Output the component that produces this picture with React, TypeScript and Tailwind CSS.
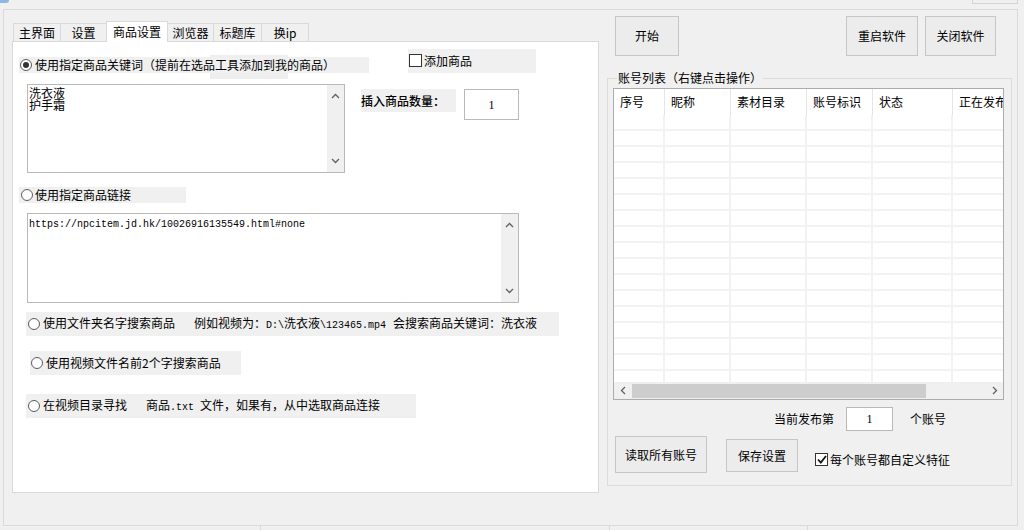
import React from "react";

const tabs = [
  { label: "主界面", w: "w-[48px]" },
  { label: "设置", w: "w-[46px]" },
  { label: "商品设置", w: "w-[62px]", active: true },
  { label: "浏览器", w: "w-[46px]" },
  { label: "标题库", w: "w-[48px]" },
  { label: "换ip", w: "w-[47px]" },
];

const columns = [
  { label: "序号", w: "w-[51px]" },
  { label: "昵称", w: "w-[66px]" },
  { label: "素材目录", w: "w-[76px]" },
  { label: "账号标识", w: "w-[66px]" },
  { label: "状态", w: "w-[80px]" },
  { label: "正在发布", w: "w-[60px]" },
];

function Radio({ checked = false }: { checked?: boolean }) {
  return (
    <span className="w-[12px] h-[12px] rounded-full border border-[#5c5c5c] bg-white flex items-center justify-center shrink-0">
      {checked && <span className="w-[6px] h-[6px] rounded-full bg-[#333333]" />}
    </span>
  );
}

function Check({ checked = false }: { checked?: boolean }) {
  return (
    <span className="w-[13px] h-[13px] border border-[#333333] bg-white flex items-center justify-center shrink-0">
      {checked && (
        <svg width="10" height="9" viewBox="0 0 10 9">
          <path d="M1 4.5 L3.8 7.5 L9 1" stroke="#111" strokeWidth="1.8" fill="none" />
        </svg>
      )}
    </span>
  );
}

function ArrowUp() {
  return (
    <svg width="9" height="6" viewBox="0 0 9 6">
      <path d="M1 5 L4.5 1.5 L8 5" stroke="#606060" strokeWidth="1.3" fill="none" />
    </svg>
  );
}

function ArrowDown() {
  return (
    <svg width="9" height="6" viewBox="0 0 9 6">
      <path d="M1 1 L4.5 4.5 L8 1" stroke="#606060" strokeWidth="1.3" fill="none" />
    </svg>
  );
}

function ArrowLeft() {
  return (
    <svg width="6" height="9" viewBox="0 0 6 9">
      <path d="M5 1 L1.5 4.5 L5 8" stroke="#606060" strokeWidth="1.3" fill="none" />
    </svg>
  );
}

function ArrowRight() {
  return (
    <svg width="6" height="9" viewBox="0 0 6 9">
      <path d="M1 1 L4.5 4.5 L1 8" stroke="#606060" strokeWidth="1.3" fill="none" />
    </svg>
  );
}

function Button({ label, className }: { label: string; className: string }) {
  return (
    <div
      className={
        "flex items-center justify-center border border-[#c6c6c6] bg-[#ececec] text-[12px] leading-none shrink-0 " +
        className
      }
    >
      {label}
    </div>
  );
}

function VScroll() {
  return (
    <div className="w-[17px] h-full bg-[#f0f0f0] flex flex-col items-center justify-between py-[8px] shrink-0">
      <ArrowUp />
      <ArrowDown />
    </div>
  );
}

export default function App() {
  return (
    <div className="w-[1024px] h-[530px] bg-[#f0f0f0] overflow-hidden flex flex-col text-black text-[12px] leading-none [font-family:'Noto_Sans_CJK_SC','Noto_Sans',sans-serif]">
      {/* top strip */}
      <div className="h-[9px] flex shrink-0">
        <div className="w-[9px] h-[3px] bg-[#8ab8e3] rounded-br-full" />
        <div className="ml-auto mr-[6px] w-[46px] h-[4px] border-x border-b border-[#d4d4d4]" />
      </div>

      {/* window frame */}
      <div className="ml-[3px] w-[1015px] h-[517px] border border-[#dadada] flex shrink-0">
        {/* left: tab control */}
        <div className="ml-[8px] mt-[11px] w-[587px] flex flex-col">
          <div className="h-[20px] flex items-end pl-[1px]">
            {tabs.map((t, i) =>
              t.active ? (
                <div
                  key={t.label}
                  className={
                    t.w +
                    " h-[21px] -mb-px -ml-px relative z-10 bg-white border-x border-t border-[#d9d9d9] flex items-center justify-center"
                  }
                >
                  {t.label}
                </div>
              ) : (
                <div
                  key={t.label}
                  className={
                    t.w +
                    (i === 0 ? " border-l" : "") +
                    " h-[18px] bg-[#f0f0f0] border-t border-r border-[#d9d9d9] flex items-center justify-center"
                  }
                >
                  {t.label}
                </div>
              )
            )}
          </div>

          <div className="w-[587px] h-[452px] bg-white border border-[#d9d9d9] relative flex flex-col">
            {/* box sitting behind the first option */}
            <div className="absolute left-[197px] top-[13px] w-[78px] h-[24px] bg-[#eeeeee]" />

            {/* option 1 + add goods */}
            <div className="mt-[7px] h-[24px] flex items-start">
              <div className="ml-[6px] mt-[8px] w-[350px] h-[16px] bg-[#f0f0f0] flex items-center relative z-10">
                <span className="ml-[1px]">
                  <Radio checked />
                </span>
                <span className="ml-[3px] whitespace-nowrap">使用指定商品关键词（提前在选品工具添加到我的商品）</span>
              </div>
              <div className="ml-[39px] w-[128px] h-[24px] bg-[#f0f0f0] flex items-center pb-[1px]">
                <span className="ml-[1px]">
                  <Check />
                </span>
                <span className="ml-[2px]">添加商品</span>
              </div>
            </div>

            {/* keywords box + count */}
            <div className="mt-[11px] flex items-start">
              <div className="ml-[14px] w-[318px] h-[89px] border border-[#b9b9b9] bg-white flex">
                <div className="flex-1 pl-[1px] pt-[2px] text-[12px] leading-[12px]">
                  <div>洗衣液</div>
                  <div>护手霜</div>
                </div>
                <VScroll />
              </div>
              <div className="ml-[16px] mt-[5px] w-[95px] h-[23px] bg-[#f0f0f0] flex items-center">
                <span className="font-medium">插入商品数量：</span>
              </div>
              <div className="ml-[8px] mt-[5px] w-[55px] h-[31px] border border-[#b9b9b9] bg-white flex items-center justify-center [font-family:'Liberation_Serif',serif] text-[12px]">
                1
              </div>
            </div>

            {/* option 2 */}
            <div className="mt-[14px] ml-[6px] w-[167px] h-[16px] bg-[#f0f0f0] flex items-center">
              <span className="ml-[2px]">
                <Radio />
              </span>
              <span className="ml-[2px] whitespace-nowrap">使用指定商品链接</span>
            </div>

            {/* link box */}
            <div className="mt-[10px] ml-[14px] w-[492px] h-[90px] border border-[#b9b9b9] bg-white flex">
              <div className="flex-1 pl-[1px] pt-[5px] text-[10px] leading-[12px] [font-family:'Liberation_Mono',monospace]">
                https://npcitem.jd.hk/10026916135549.html#none
              </div>
              <VScroll />
            </div>

            {/* option 3 */}
            <div className="mt-[9px] ml-[13px] w-[533px] h-[24px] bg-[#f0f0f0] flex items-center whitespace-nowrap">
              <span className="ml-[2px]">
                <Radio />
              </span>
              <span className="ml-[3px]">
                使用文件夹名字搜索商品
                <span className="ml-[19px]">例如视频为：</span>
                <span className="[font-family:'Liberation_Mono',monospace] text-[10px]">D:\</span>
                洗衣液
                <span className="[font-family:'Liberation_Mono',monospace] text-[10px]">\123465.mp4</span>
                <span className="ml-[7px]">会搜索商品关键词：洗衣液</span>
              </span>
            </div>

            {/* option 4 */}
            <div className="mt-[15px] ml-[17px] w-[211px] h-[24px] bg-[#f0f0f0] flex items-center whitespace-nowrap">
              <span className="ml-[1px]">
                <Radio />
              </span>
              <span className="ml-[3px]">使用视频文件名前2个字搜索商品</span>
            </div>

            {/* option 5 */}
            <div className="mt-[19px] ml-[13px] w-[390px] h-[24px] bg-[#f0f0f0] flex items-center whitespace-nowrap">
              <span className="ml-[2px]">
                <Radio />
              </span>
              <span className="ml-[3px]">
                在视频目录寻找
                <span className="ml-[19px]">商品</span>
                <span className="[font-family:'Liberation_Mono',monospace] text-[10px]">.txt</span>
                <span className="ml-[6px]">文件，如果有，从中选取商品连接</span>
              </span>
            </div>
          </div>
        </div>

        {/* right column */}
        <div className="ml-[8px] mt-[6px] w-[405px] flex flex-col">
          <div className="h-[40px] flex">
            <Button label="开始" className="ml-[8px] w-[64px] h-[40px]" />
            <Button label="重启软件" className="ml-auto w-[72px] h-[40px]" />
            <Button label="关闭软件" className="ml-[7px] mr-[16px] w-[71px] h-[40px]" />
          </div>

          <div className="mt-[22px] h-[408px] border border-[#dcdcdc] relative flex flex-col">
            <span className="absolute left-[9px] -top-[7px] px-[1px] bg-[#f0f0f0] whitespace-nowrap">
              账号列表（右键点击操作）
            </span>

            {/* list view */}
            <div className="mt-[9px] ml-[5px] w-[391px] h-[312px] border border-[#acacac] bg-white flex flex-col overflow-hidden">
              <div className="h-[26px] flex shrink-0 overflow-hidden">
                {columns.map((c) => (
                  <div
                    key={c.label}
                    className={c.w + " shrink-0 h-full flex items-center pl-[6px] border-r border-[#e5e5e5] whitespace-nowrap overflow-hidden"}
                  >
                    {c.label}
                  </div>
                ))}
              </div>
              <div className="flex-1 overflow-hidden">
                {Array.from({ length: 17 }).map((_, r) => (
                  <div key={r} className="h-[16px] flex border-b-2 border-[#f2f2f2]">
                    {columns.map((c) => (
                      <div key={c.label} className={c.w + " shrink-0 h-full border-r-2 border-[#f2f2f2]"} />
                    ))}
                  </div>
                ))}
              </div>
              <div className="h-[17px] flex items-center bg-[#f0f0f0] shrink-0">
                <div className="w-[17px] h-full flex items-center justify-center">
                  <ArrowLeft />
                </div>
                <div className="ml-[1px] w-[294px] h-[14px] bg-[#cdcdcd]" />
                <div className="flex-1" />
                <div className="w-[17px] h-full flex items-center justify-center">
                  <ArrowRight />
                </div>
              </div>
            </div>

            {/* current account */}
            <div className="mt-[7px] h-[24px] flex items-center">
              <span className="ml-[166px]">当前发布第</span>
              <div className="ml-[12px] w-[47px] h-[24px] border border-[#b9b9b9] bg-white flex items-center justify-center [font-family:'Liberation_Serif',serif]">
                1
              </div>
              <span className="ml-[17px]">个账号</span>
            </div>

            {/* bottom buttons */}
            <div className="mt-[5px] flex items-start">
              <Button label="读取所有账号" className="ml-[7px] w-[92px] h-[37px]" />
              <Button label="保存设置" className="ml-[19px] mt-[3px] w-[72px] h-[33px]" />
              <div className="ml-[17px] mt-[17px] flex items-center">
                <Check checked />
                <span className="ml-[2px] whitespace-nowrap">每个账号都自定义特征</span>
              </div>
            </div>
          </div>
        </div>
      </div>

      {/* status bar */}
      <div className="flex-1 flex">
        <div className="w-[260px]" />
        <div className="w-[349px] border-l border-[#d8d8d8]" />
        <div className="w-[198px] border-l border-[#d8d8d8]" />
        <div className="flex-1 border-l border-[#d8d8d8]" />
      </div>
    </div>
  );
}
